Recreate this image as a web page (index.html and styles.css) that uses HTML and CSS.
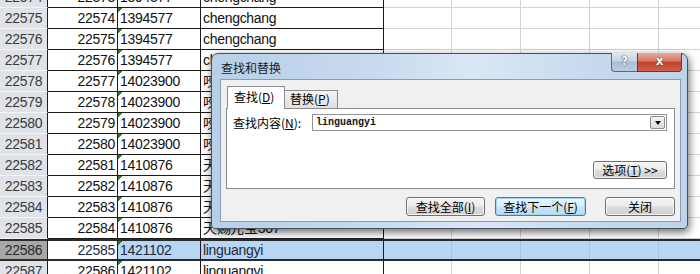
FILE: index.html
```html
<!DOCTYPE html>
<html lang="zh-CN">

<head>
    <meta charset="UTF-8">
    <title>查找和替换</title>
    <link rel="stylesheet" href="styles.css">
</head>

<body>
    <div class="sheet">
        <div class="row"><div class="hd">22574</div><div class="num">22573</div><div class="txt flag">1394577</div><div class="txt">chengchang</div><div class="rest"></div></div>
        <div class="row"><div class="hd">22575</div><div class="num">22574</div><div class="txt flag">1394577</div><div class="txt">chengchang</div><div class="rest"></div></div>
        <div class="row"><div class="hd">22576</div><div class="num">22575</div><div class="txt flag">1394577</div><div class="txt">chengchang</div><div class="rest"></div></div>
        <div class="row"><div class="hd">22577</div><div class="num">22576</div><div class="txt flag">1394577</div><div class="txt">chengchang</div><div class="rest"></div></div>
        <div class="row"><div class="hd">22578</div><div class="num">22577</div><div class="txt flag">14023900</div><div class="txt">咬咬咬307</div><div class="rest"></div></div>
        <div class="row"><div class="hd">22579</div><div class="num">22578</div><div class="txt flag">14023900</div><div class="txt">咬咬咬307</div><div class="rest"></div></div>
        <div class="row"><div class="hd">22580</div><div class="num">22579</div><div class="txt flag">14023900</div><div class="txt">咬咬咬307</div><div class="rest"></div></div>
        <div class="row"><div class="hd">22581</div><div class="num">22580</div><div class="txt flag">14023900</div><div class="txt">咬咬咬307</div><div class="rest"></div></div>
        <div class="row"><div class="hd">22582</div><div class="num">22581</div><div class="txt flag">1410876</div><div class="txt">天赐元宝307</div><div class="rest"></div></div>
        <div class="row"><div class="hd">22583</div><div class="num">22582</div><div class="txt flag">1410876</div><div class="txt">天赐元宝307</div><div class="rest"></div></div>
        <div class="row"><div class="hd">22584</div><div class="num">22583</div><div class="txt flag">1410876</div><div class="txt">天赐元宝307</div><div class="rest"></div></div>
        <div class="row"><div class="hd">22585</div><div class="num">22584</div><div class="txt flag">1410876</div><div class="txt">天赐元宝307</div><div class="rest"></div></div>
        <div class="row sel"><div class="hd">22586</div><div class="num">22585</div><div class="txt flag">1421102</div><div class="txt">linguangyi</div><div class="rest"></div></div>
        <div class="row"><div class="hd">22587</div><div class="num">22586</div><div class="txt flag">1421102</div><div class="txt">linguangyi</div><div class="rest"></div></div>
    </div>

    <div class="dlg">
        <div class="titlebar">
            <span class="title">查找和替换</span>
            <div class="caption-btns">
                <span class="cb help">?</span>
                <span class="cb close">x</span>
            </div>
        </div>
        <div class="dlg-body">
            <div class="tabs">
                <div class="tab on">查找(<u>D</u>)</div>
                <div class="tab">替换(<u>P</u>)</div>
            </div>
            <div class="panel">
                <div class="find-row">
                    <span class="lbl">查找内容(<u>N</u>):</span>
                    <div class="combo">
                        <span class="combo-text">linguangyi</span>
                        <span class="combo-arrow"></span>
                    </div>
                </div>
                <div class="opt-row">
                    <button class="btn opt">选项(<u>T</u>) &gt;&gt;</button>
                </div>
            </div>
            <div class="actions">
                <button class="btn find-all">查找全部(<u>I</u>)</button>
                <button class="btn find-next">查找下一个(<u>F</u>)</button>
                <button class="btn close-btn">关闭</button>
            </div>
        </div>
    </div>
</body>

</html>
```

FILE: styles.css
```css
body {
    margin: 0;
    width: 700px;
    height: 274px;
    overflow: hidden;
    background-color: #fff;
    font-family: "Liberation Sans", Arial, sans-serif;
}

/* spreadsheet */

.sheet {
    margin-top: -13px;
}

.row {
    display: grid;
    grid-template-columns: 48px 70px 83px 183px 1fr;
    height: 21px;
}

.row > div {
    box-sizing: border-box;
    border-right: 1px solid #1c1c1c;
    border-bottom: 1px solid #1c1c1c;
    font-size: 14px;
    letter-spacing: -0.3px;
    line-height: 20px;
    color: #111;
    white-space: nowrap;
    overflow: hidden;
}

.row .hd {
    background-color: #dfe3e8;
    border-bottom-color: #f3f5f7;
    color: #3a3a3a;
    text-align: center;
}

.row .num {
    text-align: right;
    padding-right: 2px;
}

.row .txt {
    padding-left: 2px;
}

.row .flag {
    background-image: linear-gradient(135deg, #2f7d32 0 3px, transparent 3px);
    background-size: 6px 6px;
    background-repeat: no-repeat;
}

.row .rest {
    border-right: none;
    border-bottom-color: #d4d4d4;
    background-image: repeating-linear-gradient(90deg, transparent 0 67px, #d4d4d4 67px 68px, transparent 68px 69px);
}

.row.sel {
    height: 22px;
}

.row.sel > div {
    border-top: 2px solid #2a2a2a;
    border-bottom: 2px solid #2a2a2a;
    line-height: 18px;
    background-color: #b8d5f4;
    color: #1d2b3c;
}

.row.sel .hd {
    background-color: #a7a7a7;
    color: #2a2a2a;
}

.row.sel .num {
    background-color: #fff;
}

.row.sel .flag {
    background-image: linear-gradient(135deg, #2f7d32 0 3px, transparent 3px);
}

.row.sel .rest {
    background-image: repeating-linear-gradient(90deg, transparent 0 67px, #a9c4e2 67px 68px, transparent 68px 69px);
}

/* find & replace dialog */

.dlg {
    position: absolute;
    left: 211px;
    top: 53px;
    width: 477px;
    height: 176px;
    box-sizing: border-box;
    display: flex;
    flex-direction: column;
    padding: 0 6px 6px 8px;
    border: 1px solid #46525f;
    border-radius: 7px 7px 4px 4px;
    background: linear-gradient(90deg, #b7cfe8 0%, #c8dbef 35%, #dae7f5 55%, #c6daee 80%, #bdd3ea 100%);
    box-shadow: 1px 3px 9px rgba(0, 0, 0, 0.6);
    font-family: "Noto Sans CJK SC", "Liberation Sans", sans-serif;
    font-size: 12px;
    color: #000;
}

.titlebar {
    display: flex;
    justify-content: space-between;
    align-items: flex-start;
    height: 25px;
}

.title {
    padding: 6px 0 0 1px;
    line-height: 16px;
    font-size: 12px;
    color: #1a1a1a;
}

.caption-btns {
    display: flex;
    margin-top: -1px;
    margin-right: -1px;
}

.cb {
    box-sizing: border-box;
    height: 19px;
    border: 1px solid #5b6a7e;
    border-top: none;
    font-family: "DejaVu Sans", sans-serif;
    font-weight: bold;
    text-align: center;
    color: #fff;
    line-height: 16px;
    text-shadow: 0 0 1px #2b3a4c, 0 0 1px #2b3a4c;
}

.cb.help {
    width: 26px;
    border-right: none;
    border-bottom-left-radius: 4px;
    background: linear-gradient(#dbe6f2 0%, #c3d3e5 45%, #a9bed6 50%, #b9cde2 100%);
    font-size: 12px;
}

.cb.close {
    width: 45px;
    border-bottom-right-radius: 4px;
    border-color: #7e2e22;
    background: linear-gradient(#e9a999 0%, #d77865 45%, #c4402b 50%, #d0604c 100%);
    font-size: 12px;
    text-shadow: 0 0 1px #5a1a10, 0 0 1px #5a1a10;
}

.dlg-body {
    flex: 1;
    display: flex;
    flex-direction: column;
    border: 1px solid #8a9cb2;
    background-color: #f0f0f0;
}

.tabs {
    display: flex;
    align-items: flex-end;
    height: 22px;
    margin: 6px 0 0 6px;
}

.tab {
    box-sizing: border-box;
    width: 53px;
    height: 18px;
    padding-left: 5px;
    border: 1px solid #898c95;
    border-bottom: none;
    border-left: none;
    background: linear-gradient(#f3f3f3, #e0e0e0);
    line-height: 16px;
}

.tab.on {
    width: 58px;
    height: 23px;
    margin-bottom: -1px;
    padding-left: 6px;
    border-left: 1px solid #898c95;
    background: #fff;
    line-height: 20px;
    position: relative;
}

.panel {
    box-sizing: border-box;
    height: 81px;
    margin: 0 5px 0 5px;
    padding: 5px 7px 9px 6px;
    display: flex;
    flex-direction: column;
    justify-content: space-between;
    border: 1px solid #898c95;
    background-color: #fff;
}

.find-row {
    display: flex;
    align-items: center;
}

.lbl {
    width: 79px;
    line-height: 17px;
}

.combo {
    flex: 1;
    box-sizing: border-box;
    height: 17px;
    display: flex;
    align-items: center;
    justify-content: space-between;
    border: 1px solid #8f969e;
    padding: 0 1px 0 3px;
}

.combo-text {
    font-family: "Liberation Mono", monospace;
    font-size: 10px;
    font-weight: bold;
    color: #111;
}

.combo-arrow {
    box-sizing: border-box;
    width: 15px;
    height: 13px;
    border: 1px solid #8d8d8d;
    border-radius: 2px;
    background: linear-gradient(#f6f6f6, #dcdcdc);
    display: flex;
    align-items: center;
    justify-content: center;
}

.combo-arrow::after {
    content: '';
    border-left: 3.5px solid transparent;
    border-right: 3.5px solid transparent;
    border-top: 4px solid #000;
}

.opt-row {
    display: flex;
    justify-content: flex-end;
}

.btn {
    box-sizing: border-box;
    height: 19px;
    padding: 0;
    border: 1px solid #707070;
    border-radius: 3px;
    background: linear-gradient(#f4f4f4 0%, #ebebeb 48%, #dcdcdc 52%, #d0d0d0 100%);
    font-family: "Noto Sans CJK SC", "Liberation Sans", sans-serif;
    font-size: 12px;
    line-height: 16px;
    color: #000;
    box-shadow: inset 0 0 0 1px rgba(255, 255, 255, 0.7);
}

.btn.opt {
    width: 74px;
    height: 18px;
}

.actions {
    display: flex;
    justify-content: flex-end;
    gap: 10px;
    margin: 8px 5px 0 0;
}

.btn.find-all {
    width: 79px;
}

.btn.find-next {
    width: 91px;
    margin-right: 9px;
    border-color: #3c7fb1;
    background: linear-gradient(#ecf6fc 0%, #dcedf8 48%, #c9e3f5 52%, #bcdcf2 100%);
    box-shadow: inset 0 0 0 1px #9fd6f4;
}

.btn.close-btn {
    width: 70px;
}
```
